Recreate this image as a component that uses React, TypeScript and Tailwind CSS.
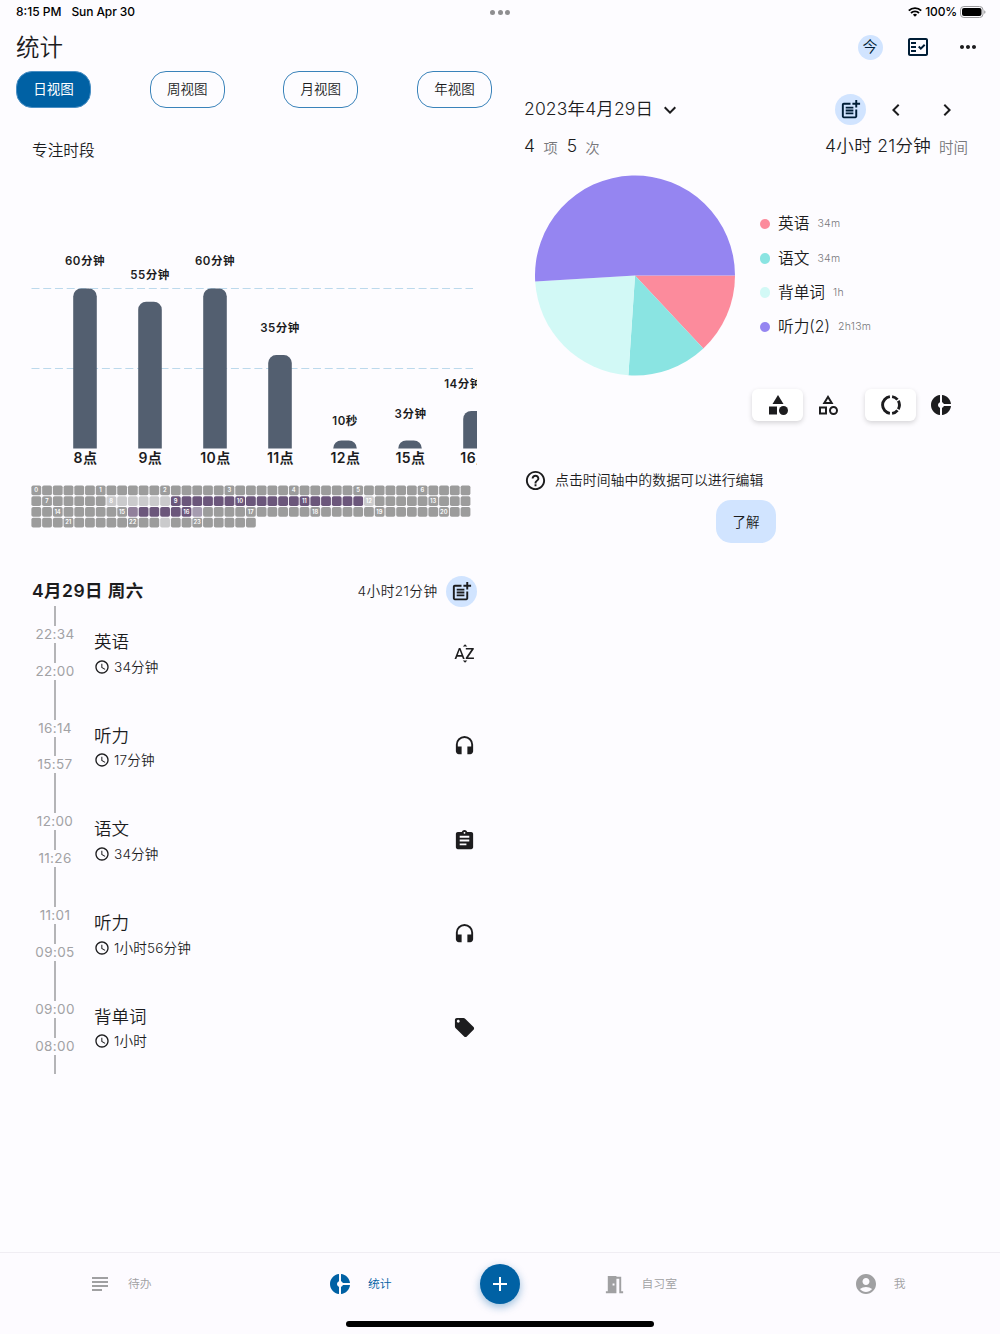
import type { ReactNode } from "react";
import {
  MdAccessTime,
  MdAccountCircle,
  MdAdd,
  MdAssignment,
  MdCategory,
  MdChevronLeft,
  MdChevronRight,
  MdDonutSmall,
  MdExpandMore,
  MdHeadset,
  MdHelpOutline,
  MdLocalOffer,
  MdMeetingRoom,
  MdMoreHoriz,
  MdOutlineCategory,
  MdOutlineFactCheck,
  MdPostAdd,
  MdSortByAlpha,
  MdSubject,
} from "react-icons/md";

const tabs = ["日视图", "周视图", "月视图", "年视图"];

const bars = [
  { hour: "8点", label: "60分钟", height: 160, labelX: 85, labelY: 265 },
  { hour: "9点", label: "55分钟", height: 146.7, labelX: 150, labelY: 278.5 },
  { hour: "10点", label: "60分钟", height: 160, labelX: 215, labelY: 265 },
  { hour: "11点", label: "35分钟", height: 93.3, labelX: 280, labelY: 332 },
  { hour: "12点", label: "10秒", height: 8, labelX: 345, labelY: 425 },
  { hour: "15点", label: "3分钟", height: 8, labelX: 410.5, labelY: 417.5 },
  { hour: "16点", label: "14分钟", height: 37.5, labelX: 463, labelY: 387.5 },
];

const slices = [
  { name: "英语", time: "34m", minutes: 34, color: "#fc8b9c" },
  { name: "语文", time: "34m", minutes: 34, color: "#8ae4e2" },
  { name: "背单词", time: "1h", minutes: 60, color: "#d2f9f6" },
  { name: "听力(2)", time: "2h13m", minutes: 133, color: "#9585f1" },
];

const records = [
  { end: "22:34", start: "22:00", name: "英语", duration: "34分钟", icon: <MdSortByAlpha size={23} /> },
  { end: "16:14", start: "15:57", name: "听力", duration: "17分钟", icon: <MdHeadset size={23} /> },
  { end: "12:00", start: "11:26", name: "语文", duration: "34分钟", icon: <MdAssignment size={23} /> },
  { end: "11:01", start: "09:05", name: "听力", duration: "1小时56分钟", icon: <MdHeadset size={23} /> },
  { end: "09:00", start: "08:00", name: "背单词", duration: "1小时", icon: <MdLocalOffer size={23} /> },
];

const StatusBar = () => (
  <div className="flex h-6 items-center justify-between pl-4 pr-[14.5px] text-[12px] font-medium text-black">
    <div className="flex w-[200px] gap-[10px] tracking-[-0.1px]">
      <span className="tracking-normal">8:15 PM</span>
      <span>Sun Apr 30</span>
    </div>
    <div className="-ml-[1px] flex gap-[2.5px]">
      <span className="size-[5px] rounded-full bg-[#8e8e90]" />
      <span className="size-[5px] rounded-full bg-[#8e8e90]" />
      <span className="size-[5px] rounded-full bg-[#8e8e90]" />
    </div>
    <div className="flex w-[200px] items-center justify-end">
      <svg width="14" height="10" viewBox="0 0 14 10" fill="none" stroke="#000" strokeWidth="1.9">
        <path d="M0.8 3.7a8.8 8.8 0 0 1 12.4 0" />
        <path d="M3 6a5.7 5.7 0 0 1 8 0" />
        <path d="M7 9.8L4.9 7.7a3 3 0 0 1 4.2 0z" fill="#000" stroke="none" />
      </svg>
      <span className="ml-[3.5px] mr-[3px] tracking-[-0.15px]">100%</span>
      <svg width="25.5" height="12" viewBox="0 0 25.5 12">
        <rect x="0.5" y="0.5" width="22.5" height="11" rx="3.4" fill="none" stroke="#9b9b9d" />
        <rect x="2" y="2" width="19.5" height="8" rx="2" />
        <path d="M24.2 4.2v3.6a1.9 1.9 0 0 0 0-3.6z" fill="#9b9b9d" />
      </svg>
    </div>
  </div>
);

const BarChart = () => (
  <svg className="block" width="446" height="230" viewBox="31 242 446 230">
    {[288.5, 368.5].map((y) => (
      <line key={y} x1="31.5" x2="473" y1={y} y2={y} stroke="#bcd9ec" strokeDasharray="8 3.73" />
    ))}
    {bars.map((bar, i) => {
      const x = 85 + i * 65;
      const top = 448.4 - bar.height;
      return (
        <g key={bar.hour} fill="#1c1c1e" textAnchor="middle" className="font-semibold">
          <path
            d={`M${x - 11.8} 448.4V${top + 8}a8 8 0 0 1 8-8h7.6a8 8 0 0 1 8 8V448.4z`}
            fill="#535f70"
          />
          <text x={bar.labelX} y={bar.labelY} className="text-[11.5px] tracking-[0.5px]">
            {bar.label}
          </text>
          <text x={x + 0.4} y="463" className="text-[14px] tracking-[0.4px]">
            {bar.hour}
          </text>
        </g>
      );
    })}
  </svg>
);

// one cell per ten minutes, 41 cells in a row
const cellColor = (i: number) => {
  if (i >= 54 && i <= 71) return "#6b567b";
  if (i >= 92 && i <= 96) return "#6b567b";
  if ((i >= 48 && i <= 53) || i === 72 || i === 135) return "#cacacc";
  if (i === 91) return "#91809b";
  if (i === 97) return "#a59cb0";
  return "#9c9c9c";
};

const DayGrid = () => (
  <svg className="block" width="440" height="44" viewBox="0 0 440 44">
    {Array.from({ length: 144 }, (_, i) => {
      const x = (i % 41) * 10.73 + 0.4;
      const y = Math.floor(i / 41) * 10.75 + 0.5;
      return (
        <g key={i}>
          <rect x={x} y={y} width="9.8" height="9.8" rx="1.8" fill={cellColor(i)} />
          {i % 6 === 0 && (
            <text x={x + 4.7} y={y + 6.5} textAnchor="middle" fill="#fff" className="text-[5.8px] font-semibold">
              {i / 6}
            </text>
          )}
        </g>
      );
    })}
  </svg>
);

const PieChart = () => {
  const total = slices.reduce((sum, s) => sum + s.minutes, 0);
  let angle = 0;
  return (
    <svg className="block" width="200" height="201" viewBox="-100 -100.5 200 201">
      {slices.map((s) => {
        const from = angle;
        angle += (s.minutes / total) * Math.PI * 2;
        const large = angle - from > Math.PI ? 1 : 0;
        return (
          <path
            key={s.name}
            fill={s.color}
            d={`M0 0L${100 * Math.cos(from)} ${100 * Math.sin(from)}A100 100 0 ${large} 1 ${100 * Math.cos(angle)} ${100 * Math.sin(angle)}z`}
          />
        );
      })}
    </svg>
  );
};

// ring split at the top and bottom, with two narrow cuts on the right side
const RingIcon = () => (
  <svg width="24" height="24" viewBox="-12 -12 24 24" fill="none" stroke="currentColor" strokeWidth="2.9">
    <path d="M-1.1 -8.33A8.4 8.4 0 0 0 -1.1 8.33" />
    <path d="M1.1 -8.33A8.4 8.4 0 0 1 6.5 -5.32" />
    <path d="M7.3 -4.16A8.4 8.4 0 0 1 7.3 4.16" />
    <path d="M6.5 5.32A8.4 8.4 0 0 1 1.1 8.33" />
  </svg>
);

const Timeline = () => (
  <div className="-mt-[0.5px]">
    {records.map((r) => (
      <div key={r.end} className="flex h-[93.7px]">
        <div className="flex w-[48px] flex-col items-center text-[13.5px] tracking-[0.35px] text-[#a2a2a5]">
          <span className="w-[1.5px] flex-1 bg-[#b4b4b7]" />
          <span className="h-[17px] leading-[17px]">{r.end}</span>
          <span className="w-[1.5px] flex-1 bg-[#b4b4b7]" />
          <span className="h-[17px] leading-[17px]">{r.start}</span>
          <span className="w-[1.5px] flex-1 bg-[#b4b4b7]" />
        </div>
        <div className="flex-1 pl-[15px] pt-[24px]">
          <div className="text-[17.5px] font-[350] leading-6">{r.name}</div>
          <div className="mt-[2.5px] flex items-center gap-1 text-[13.6px] font-[350] leading-5 tracking-[0.15px]">
            <MdAccessTime size={16} />
            {r.duration}
          </div>
        </div>
        <div className="mr-[1px] mt-[35.5px] text-[#1d1d1f]">{r.icon}</div>
      </div>
    ))}
  </div>
);

const NavItem = ({ icon, label, active }: { icon: ReactNode; label: string; active?: boolean }) => (
  <div className={active ? "flex items-center text-[#0061a4]" : "flex items-center text-[#a0a0a2]"}>
    {icon}
    <span className="ml-[15.5px] pt-[1px] text-[11.8px] font-[350]">{label}</span>
  </div>
);

const App = () => {
  return (
    <div className="flex h-[1334px] w-[1000px] flex-col overflow-hidden bg-[#fdfcff] font-[Inter,'Noto_Sans_CJK_SC',sans-serif] text-[#1c1c1e]">
      <StatusBar />

      <header className="flex h-[46.5px] items-center pl-4 pr-[20px]">
        <h1 className="flex-1 text-[23.5px] font-[350]">统计</h1>
        <span className="flex size-[25px] items-center justify-center rounded-full bg-[#d1e4ff] text-[15px] font-[350] text-[#001d36]">
          今
        </span>
        <MdOutlineFactCheck size={24} className="ml-[23px] text-[#001d36]" />
        <MdMoreHoriz size={24} className="ml-[26.5px]" />
      </header>

      <div className="flex flex-1">
        <section className="w-1/2">
          <div className="flex justify-between pl-4 pr-2">
            {tabs.map((tab, i) => (
              <button
                key={tab}
                className={
                  i === 0
                    ? "h-[37px] w-[75px] rounded-[16px] border border-[#4a8fc4] bg-[#0061a4] pt-[1px] text-[13.5px] text-white"
                    : "h-[37px] w-[75px] rounded-[16px] border border-[#3a83ba] pt-[1px] text-[13.5px] font-[350]"
                }
              >
                {tab}
              </button>
            ))}
          </div>

          <div className="pl-[31px] pr-[23px]">
            <h2 className="mt-[31.5px] h-[24px] pl-[1px] text-[15.7px] font-[350] leading-6">专注时段</h2>
            <div className="mt-[79px]">
              <BarChart />
            </div>
            <div className="mt-[13px]">
              <DayGrid />
            </div>

            <div className="mt-[46.5px] flex h-[31px] items-center pr-[0.5px]">
              <h2 className="flex-1 pl-[1px] text-[17.5px] font-semibold tracking-[0.45px]">4月29日 周六</h2>
              <span className="text-[13.7px] font-[350] tracking-[0.4px]">4小时21分钟</span>
              <span className="ml-2 flex size-[31px] items-center justify-center rounded-full bg-[#d1e4ff]">
                <MdPostAdd size={23} />
              </span>
            </div>
            <Timeline />
          </div>
        </section>

        <section className="w-1/2 pl-6 pt-[23.5px]">
          <div className="flex h-[31px] items-center">
            <span className="text-[17.5px] font-[350] tracking-[0.15px]">2023年4月29日</span>
            <MdExpandMore size={24} className="ml-[5px]" />
            <span className="ml-auto flex size-[31px] items-center justify-center rounded-full bg-[#d1e4ff] text-[#001d36]">
              <MdPostAdd size={23} />
            </span>
            <MdChevronLeft size={24} className="ml-[18px]" />
            <MdChevronRight size={24} className="ml-[27px] mr-[41px]" />
          </div>

          <div className="mt-[7.5px] flex h-[28px] items-baseline text-[17.5px] font-[350]">
            <span>4</span>
            <span className="relative top-[1px] ml-[8.5px] text-[14.2px] text-[#78787b]">项</span>
            <span className="ml-[9px]">5</span>
            <span className="relative top-[1px] ml-[8.5px] text-[14.2px] text-[#78787b]">次</span>
            <span className="ml-auto tracking-[0.3px]">4小时 21分钟</span>
            <span className="relative top-[1px] ml-[8px] mr-8 text-[14.5px] text-[#78787b]">时间</span>
          </div>

          <div className="mt-[14.5px] flex items-center pl-[11px]">
            <PieChart />
            <ul className="ml-[24.5px]">
              {slices.map((s) => (
                <li key={s.name} className="flex h-[34.2px] items-center">
                  <span className="size-[10.5px] rounded-full" style={{ background: s.color }} />
                  <span className="ml-[8px] text-[15.7px] font-[350]">{s.name}</span>
                  <span className="ml-[8px] text-[10.5px] font-[350] tracking-[0.3px] text-[#77777a]">{s.time}</span>
                </li>
              ))}
            </ul>
          </div>

          <div className="mt-[12.5px] flex h-[32px] items-center pl-[228px]">
            <span className="flex h-[32px] w-[51px] items-center justify-center rounded-[6px] bg-white shadow-[0_2px_5px_rgba(0,0,0,0.16)]">
              <MdCategory size={24} />
            </span>
            <MdOutlineCategory size={24} className="ml-[13px]" />
            <span className="ml-[25px] flex h-[32px] w-[51px] items-center justify-center rounded-[6px] bg-white shadow-[0_2px_5px_rgba(0,0,0,0.16)]">
              <RingIcon />
            </span>
            <MdDonutSmall size={24} className="ml-[13px]" />
          </div>

          <div className="mt-[48.5px] flex h-[22px] items-center text-[13.9px] font-[350]">
            <MdHelpOutline size={23} className="mr-[8px]" />
            点击时间轴中的数据可以进行编辑
          </div>
          <button className="ml-[192px] mt-[9px] block h-[43px] w-[60px] rounded-[15px] bg-[#d1e4ff] pt-[1px] text-[13.5px] font-[350]">
            了解
          </button>
        </section>
      </div>

      <nav className="flex h-[82px] flex-col border-t border-[#f0edf3] bg-[#fdfbff]">
        <div className="flex h-[62px] items-center">
          <div className="flex w-[240px] justify-center">
            <NavItem icon={<MdSubject size={24} />} label="待办" />
          </div>
          <div className="flex w-[240px] justify-center">
            <NavItem icon={<MdDonutSmall size={24} />} label="统计" active />
          </div>
          <span className="flex size-10 items-center justify-center rounded-full bg-[#0061a4] text-white shadow-[0_3px_8px_rgba(0,97,164,0.4)]">
            <MdAdd size={24} />
          </span>
          <div className="flex w-[240px] justify-center">
            <NavItem icon={<MdMeetingRoom size={23} />} label="自习室" />
          </div>
          <div className="flex w-[240px] justify-center">
            <NavItem icon={<MdAccountCircle size={24} />} label="我" />
          </div>
        </div>
        <span className="mx-auto mt-[6px] h-[6px] w-[308px] rounded-full bg-black" />
      </nav>
    </div>
  );
};

export default App;
